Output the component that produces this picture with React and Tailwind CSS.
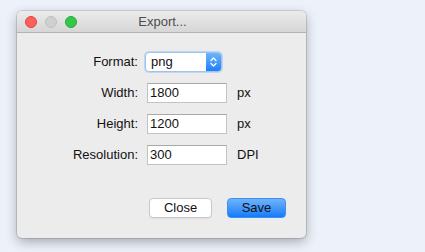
export default function App() {
  const font = { fontFamily: '"Liberation Sans", Arial, sans-serif' };
  const rows = [
    { label: 'Width:', value: '1800', unit: 'px' },
    { label: 'Height:', value: '1200', unit: 'px' },
    { label: 'Resolution:', value: '300', unit: 'DPI' },
  ];
  return (
    <div className="w-[425px] h-[252px] bg-[#edf2fa] pt-[11px] pl-[17px]" style={font}>
      <div className="w-[289px] h-[227px] rounded-[5px] bg-[#ececec] shadow-[0_0_0_1px_rgba(0,0,0,0.12),0_4px_12px_rgba(0,0,0,0.3)] flex flex-col overflow-hidden">
        <div className="h-[22px] flex items-center relative bg-gradient-to-b from-[#ececec] to-[#d6d6d6] border-b border-[#b3b3b3] px-[8px]">
          <div className="flex gap-[8px] items-center">
            <span className="w-[12px] h-[12px] rounded-full bg-[#fc605c] border border-[#e0443e]" />
            <span className="w-[12px] h-[12px] rounded-full bg-[#d0d0d0] border border-[#bdbdbd]" />
            <span className="w-[12px] h-[12px] rounded-full bg-[#34c84a] border border-[#26a936]" />
          </div>
          <div className="absolute inset-0 flex items-center justify-center text-[13px] text-[#4d4d4d] pl-[2px]">Export...</div>
        </div>
        <div className="flex-1 flex flex-col pt-[19px] pb-[20px] pr-[20px] text-[13px] text-[#111]">
          <div className="flex flex-col gap-[11px]">
            <div className="flex items-center h-[20px]">
              <div className="w-[122px] text-right pr-[1px]">Format:</div>
              <div className="ml-[6px] w-[77px] h-[20px] rounded-[4px] bg-white border border-[#9ec3f0] shadow-[0_0_0_1px_rgba(120,170,240,0.35)] flex items-stretch overflow-hidden">
                <div className="flex-1 flex items-center pl-[5px] text-[13px]">png</div>
                <div className="w-[15px] bg-gradient-to-b from-[#6db4fb] to-[#1a7ffa] flex items-center justify-center">
                  <svg width="7" height="12" viewBox="0 0 7 12" fill="none" stroke="white" strokeWidth="1.3" strokeLinecap="round" strokeLinejoin="round">
                    <path d="M1 4.5 L3.5 2 L6 4.5" />
                    <path d="M1 7.5 L3.5 10 L6 7.5" />
                  </svg>
                </div>
              </div>
            </div>
            {rows.map((r) => (
              <div key={r.label} className="flex items-center h-[20px]">
                <div className="w-[122px] text-right pr-[1px]">{r.label}</div>
                <div className="ml-[8px] w-[80px] h-[20px] bg-white border border-[#c3c3c3] border-t-[#a9a9a9] flex items-center pl-[2px]">{r.value}</div>
                <div className="ml-[10px]">{r.unit}</div>
              </div>
            ))}
          </div>
          <div className="mt-auto flex justify-end gap-[15px]">
            <div className="w-[63px] h-[20px] rounded-[4px] bg-white border border-[#c8c8c8] shadow-[0_1px_0_rgba(0,0,0,0.05)] flex items-center justify-center">Close</div>
            <div className="w-[59px] h-[20px] rounded-[4px] bg-gradient-to-b from-[#6cb3fa] to-[#0e7bf9] border border-[#3d8ff7] flex items-center justify-center">Save</div>
          </div>
        </div>
      </div>
    </div>
  );
}
